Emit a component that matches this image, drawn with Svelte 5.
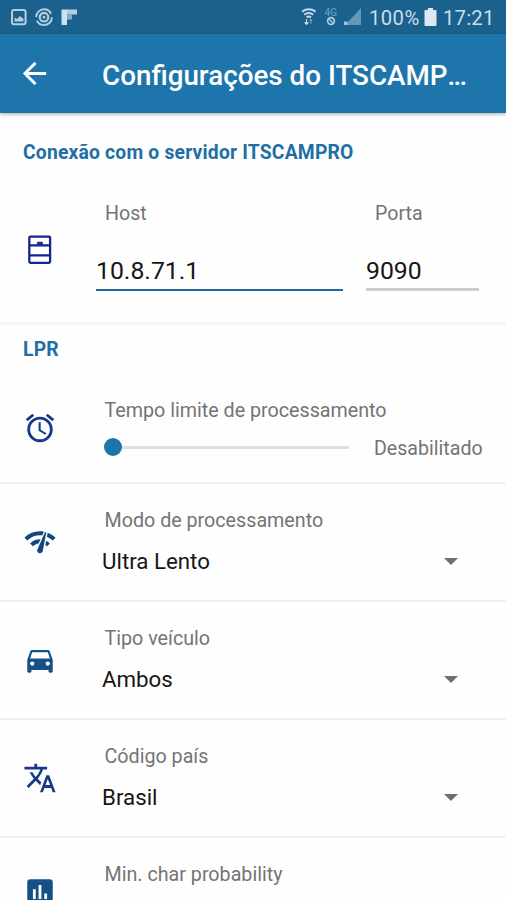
<script lang="ts">
	let host = $state('10.8.71.1');
	let port = $state('9090');
	let limit = $state(0);

	const icons = {
		network:
			'M15.9 5c-.17 0-.32.09-.41.23l-.07.15-5.18 11.65c-.16.29-.26.61-.26.96 0 1.11.9 2.01 2.01 2.01.96 0 1.77-.68 1.96-1.59l.01-.03L16.4 5.5c0-.28-.22-.5-.5-.5zM1 9l2 2c2.88-2.88 6.79-4.08 10.53-3.62l1.19-2.68C9.89 3.84 4.74 5.27 1 9zm20 2l2-2c-1.64-1.64-3.55-2.82-5.59-3.57l-.53 2.82c1.5.62 2.9 1.53 4.12 2.75zm-4 4l2-2c-.8-.8-1.7-1.42-2.66-1.89l-.55 2.92c.42.27.83.59 1.21.97zM5 13l2 2c1.13-1.13 2.56-1.79 4.03-2l1.28-2.88c-2.63-.08-5.3.87-7.31 2.88z',
		car: 'M18.92 6.01C18.72 5.42 18.16 5 17.5 5h-11c-.66 0-1.21.42-1.42 1.01L3 12v8c0 .55.45 1 1 1h1c.55 0 1-.45 1-1v-1h12v1c0 .55.45 1 1 1h1c.55 0 1-.45 1-1v-8l-2.08-5.99zM6.5 16c-.83 0-1.5-.67-1.5-1.5S5.67 13 6.5 13s1.5.67 1.5 1.5S7.33 16 6.5 16zm11 0c-.83 0-1.5-.67-1.5-1.5s.67-1.5 1.5-1.5 1.5.67 1.5 1.5-.67 1.5-1.5 1.5zM5 11l1.5-4.5h11L19 11H5z',
		translate:
			'M12.87 15.07l-2.54-2.51.03-.03c1.74-1.94 2.98-4.17 3.71-6.53H17V4h-7V2H8v2H1v1.99h11.17C11.5 7.92 10.44 9.75 9 11.35 8.07 10.32 7.3 9.19 6.69 8h-2c.73 1.63 1.73 3.17 2.98 4.56l-5.09 5.02L4 19l5-5 3.11 3.11.76-2.04zM18.5 10h-2L12 22h2l1.12-3h4.75L21 22h2l-4.5-12zm-2.62 7l1.62-4.33L19.12 17h-3.24z',
		alarm:
			'M22 5.72l-4.6-3.86-1.29 1.53 4.6 3.86L22 5.72zM7.88 3.39L6.6 1.86 2 5.71l1.29 1.53 4.59-3.85zM12.5 8H11v6l4.75 2.85.75-1.23-4-2.37V8zM12 4c-4.97 0-9 4.03-9 9s4.02 9 9 9c4.97 0 9-4.03 9-9s-4.03-9-9-9zm0 16c-3.87 0-7-3.13-7-7s3.13-7 7-7 7 3.13 7 7-3.13 7-7 7z',
		chart:
			'M19 3H5c-1.1 0-2 .9-2 2v14c0 1.1.9 2 2 2h14c1.1 0 2-.9 2-2V5c0-1.1-.9-2-2-2zM9 17H7v-7h2v7zm4 0h-2V7h2v10zm4 0h-2v-4h2v4z'
	};

	const options = [
		{ label: 'Modo de processamento', value: 'Ultra Lento', icon: icons.network, tone: 'navy' },
		{ label: 'Tipo veículo', value: 'Ambos', icon: icons.car, tone: 'steel' },
		{ label: 'Código país', value: 'Brasil', icon: icons.translate, tone: 'indigo' }
	];
</script>

<div class="screen">
	<div class="status">
		<svg class="notifications" viewBox="0 0 70 20" width="70" height="20">
			<rect x="3" y="3" width="13.6" height="14.2" rx="2" fill="none" stroke="#b4cfdf" stroke-width="2" />
			<path d="M5.5 14.5v-4l2.5 1.5 3-3 3.5 3v2.5z" fill="#b4cfdf" />
			<circle cx="35" cy="10.2" r="7.9" fill="none" stroke="#b4cfdf" stroke-width="1.9" stroke-dasharray="21 3.8" />
			<circle cx="35" cy="10.2" r="4.3" fill="none" stroke="#b4cfdf" stroke-width="2.2" />
			<circle cx="35" cy="10.2" r="1.4" fill="#b4cfdf" />
			<path d="M52.5 2.5H58V18h-5.5z" fill="#d1e1ea" />
			<path d="M58 2.5h10v5H58z" fill="#b4cfdf" />
			<path d="M58 7.5h5v5h-5z" fill="#84aec8" />
		</svg>
		<svg class="signals" viewBox="0 0 62 20" width="62" height="20">
			<g fill="none" stroke="#c4d9e5" stroke-width="2">
				<path d="M2 4.6q6.8-4.6 13.6 0M4.4 7.6q4.4-3.3 8.8 0M6.6 10.4q2.2-1.7 4.4 0" />
			</g>
			<path d="M6.5 12v4m0 1.8-1.8-2.2h3.6z" fill="#c4d9e5" stroke="#c4d9e5" />
			<path d="M11 17v-4m0-1 1.2 1.6H9.8z" fill="#6e9fbc" stroke="#6e9fbc" />
			<text x="24.5" y="8.8" class="network">4G</text>
			<circle cx="31" cy="14" r="3.4" fill="none" stroke="#b4cfdf" stroke-width="1.6" />
			<path d="M28.8 12l4.400 4" stroke="#b4cfdf" stroke-width="1.3" />
			<path d="M61 1v17H45z" fill="#6298b9" />
			<path d="M44 14.5h3.5V18H44z" fill="#a5c4d6" />
		</svg>
		<span class="percent">100%</span>
		<svg class="battery" viewBox="0 0 13 18" width="13" height="18">
			<path d="M4 0h5v2h2.5q1 0 1 1v14q0 1-1 1h-10q-1 0-1-1V3q0-1 1-1H4z" fill="#dce9f0" />
		</svg>
		<span class="clock">17:21</span>
	</div>

	<header>
		<svg viewBox="0 0 24 24" width="35" height="35" fill="#fff">
			<path d="M20 11H7.83l5.59-5.59L12 4l-8 8 8 8 1.41-1.41L7.83 13H20v-2z" />
		</svg>
		<h1>Configurações do ITSCAMP<span>...</span></h1>
	</header>

	<section class="server">
		<h2>Conexão com o servidor ITSCAMPRO</h2>
		<div class="server-row">
			<svg class="icon-server" viewBox="0 0 24 30" width="24" height="30">
				<g fill="none" stroke="#14258a" stroke-width="2.3">
					<rect x="1.3" y="1.6" width="20.8" height="26.2" rx="1.2" />
					<path d="M1.3 10.4h20.8M1.3 20.4h20.8" />
				</g>
				<path d="M8.9 10V8.1q0-1.4 1.4-1.4h3.2q1.4 0 1.4 1.4V10z" fill="#14397f" />
			</svg>
			<label class="field host">
				<span>Host</span>
				<input bind:value={host} />
			</label>
			<label class="field port">
				<span>Porta</span>
				<input bind:value={port} />
			</label>
		</div>
	</section>

	<section>
		<h2 class="lpr">LPR</h2>
		<div class="row limit">
			<svg class="icon indigo" viewBox="0 0 24 24"><path d={icons.alarm} /></svg>
			<div class="body">
				<span class="label">Tempo limite de processamento</span>
				<div class="slider">
					<input type="range" min="0" max="100" bind:value={limit} aria-label="Tempo limite de processamento" />
					<span>{limit === 0 ? 'Desabilitado' : limit}</span>
				</div>
			</div>
		</div>

		{#each options as option}
			<div class="row">
				<svg class="icon {option.tone}" viewBox="0 0 24 24"><path d={option.icon} /></svg>
				<div class="body">
					<span class="label">{option.label}</span>
					<div class="select">
						<span>{option.value}</span>
						<i></i>
					</div>
				</div>
			</div>
		{/each}

		<div class="row last">
			<svg class="icon steel" viewBox="0 0 24 24"><path d={icons.chart} /></svg>
			<div class="body">
				<span class="label">Min. char probability</span>
			</div>
		</div>
	</section>
</div>

<style>
	:global(body) {
		background: #fefefe;
	}

	.screen {
		width: 506px;
		height: 900px;
		overflow: hidden;
		background: #fefefe;
		font-family: Roboto, sans-serif;
		color: #747474;
	}

	h1,
	h2 {
		margin: 0;
		font-weight: 500;
		white-space: nowrap;
	}

	/* top bars */

	.status {
		display: flex;
		align-items: center;
		height: 34px;
		padding: 0 11px 0 9px;
		box-sizing: border-box;
		background: #1a628d;
		color: #cbdde8;
		font-size: 20.3px;
		line-height: 34px;
	}

	.signals {
		margin-left: auto;
		margin-right: 7px;
	}

	.network {
		font-size: 10px;
		font-weight: 500;
		fill: #6298b9;
	}

	.percent {
		width: 52px;
		letter-spacing: 0.4px;
		padding-top: 2px;
	}

	.battery {
		margin: 0 6px 0 3px;
	}

	.clock {
		width: 52px;
		letter-spacing: 0.2px;
		padding-top: 2px;
	}

	header {
		display: flex;
		align-items: center;
		height: 79px;
		padding-left: 17px;
		background: #1e75ab;
		color: #fff;
		box-shadow: 0 1px 4px rgba(0, 0, 0, 0.35);
	}

	h1 {
		margin-left: 50px;
		padding-top: 4px;
		font-size: 27.8px;
		line-height: 36px;
	}

	h1 span {
		letter-spacing: -1.7px;
	}

	/* sections */

	h2 {
		height: 24px;
		padding-left: 23px;
		font-size: 19.3px;
		font-weight: 700;
		line-height: 24px;
		letter-spacing: 0.2px;
		color: #1f6fa5;
	}

	.server {
		height: 212px;
		padding-top: 28px;
		box-sizing: border-box;
		border-bottom: 3px solid #f6f6f6;
	}

	.server-row {
		display: flex;
		padding: 37px 0 0 28px;
	}

	.icon-server {
		margin: 33px 44px 0 0;
	}

	.field {
		display: flex;
		flex-direction: column;
	}

	.field span {
		padding-left: 9px;
		font-size: 19.6px;
		line-height: 24px;
	}

	.field input {
		width: 100%;
		height: 37px;
		margin: 28px 0 0;
		padding: 0 0 3px;
		box-sizing: border-box;
		border: 0;
		border-bottom: 2px solid #1e68a5;
		outline: 0;
		background: none;
		color: #161616;
		font: 24.8px Roboto, sans-serif;
	}

	.host {
		width: 247px;
	}

	.port {
		width: 113px;
		margin-left: 23px;
	}

	.field.port input {
		border-bottom: 3px solid #cdcdcd;
		padding-bottom: 2px;
	}

	.lpr {
		padding-top: 13px;
	}

	/* setting rows */

	.row {
		display: flex;
		height: 118px;
		box-sizing: border-box;
		padding: 25px 0 0 23px;
		border-bottom: 2px solid #f1f1f1;
	}

	.limit {
		height: 122px;
		padding-top: 37px;
	}

	.last {
		border: 0;
	}

	.icon {
		flex: none;
		width: 34px;
		height: 34px;
		margin: 16px 45px 0 0;
	}

	.navy {
		fill: #144482;
	}

	.steel {
		fill: #175086;
	}

	.indigo {
		fill: #173a88;
	}

	.limit .icon,
	.last .icon {
		margin-top: 12px;
	}

	.body {
		flex: 1;
	}

	.label {
		display: block;
		padding-left: 2.5px;
		font-size: 19.7px;
		line-height: 24px;
	}

	.slider {
		display: flex;
		align-items: center;
		height: 24px;
		margin-top: 14px;
		padding-left: 2px;
	}

	.slider input {
		appearance: none;
		width: 246px;
		height: 18px;
		margin: -4px 24px 0 0;
		background: linear-gradient(#dedede, #dedede) 9px center / 236px 3px no-repeat;
	}

	.slider input::-webkit-slider-thumb {
		appearance: none;
		width: 18px;
		height: 18px;
		border-radius: 50%;
		background: #1e75ab;
	}

	.slider span {
		font-size: 19.6px;
		line-height: 24px;
	}

	.select {
		display: flex;
		align-items: center;
		justify-content: space-between;
		height: 30px;
		margin-top: 13px;
		padding-right: 48px;
		color: #161616;
		font-size: 22.3px;
	}

	.select i {
		border: 7px solid transparent;
		border-top-color: #6f6f6f;
		border-bottom: 0;
	}
</style>
